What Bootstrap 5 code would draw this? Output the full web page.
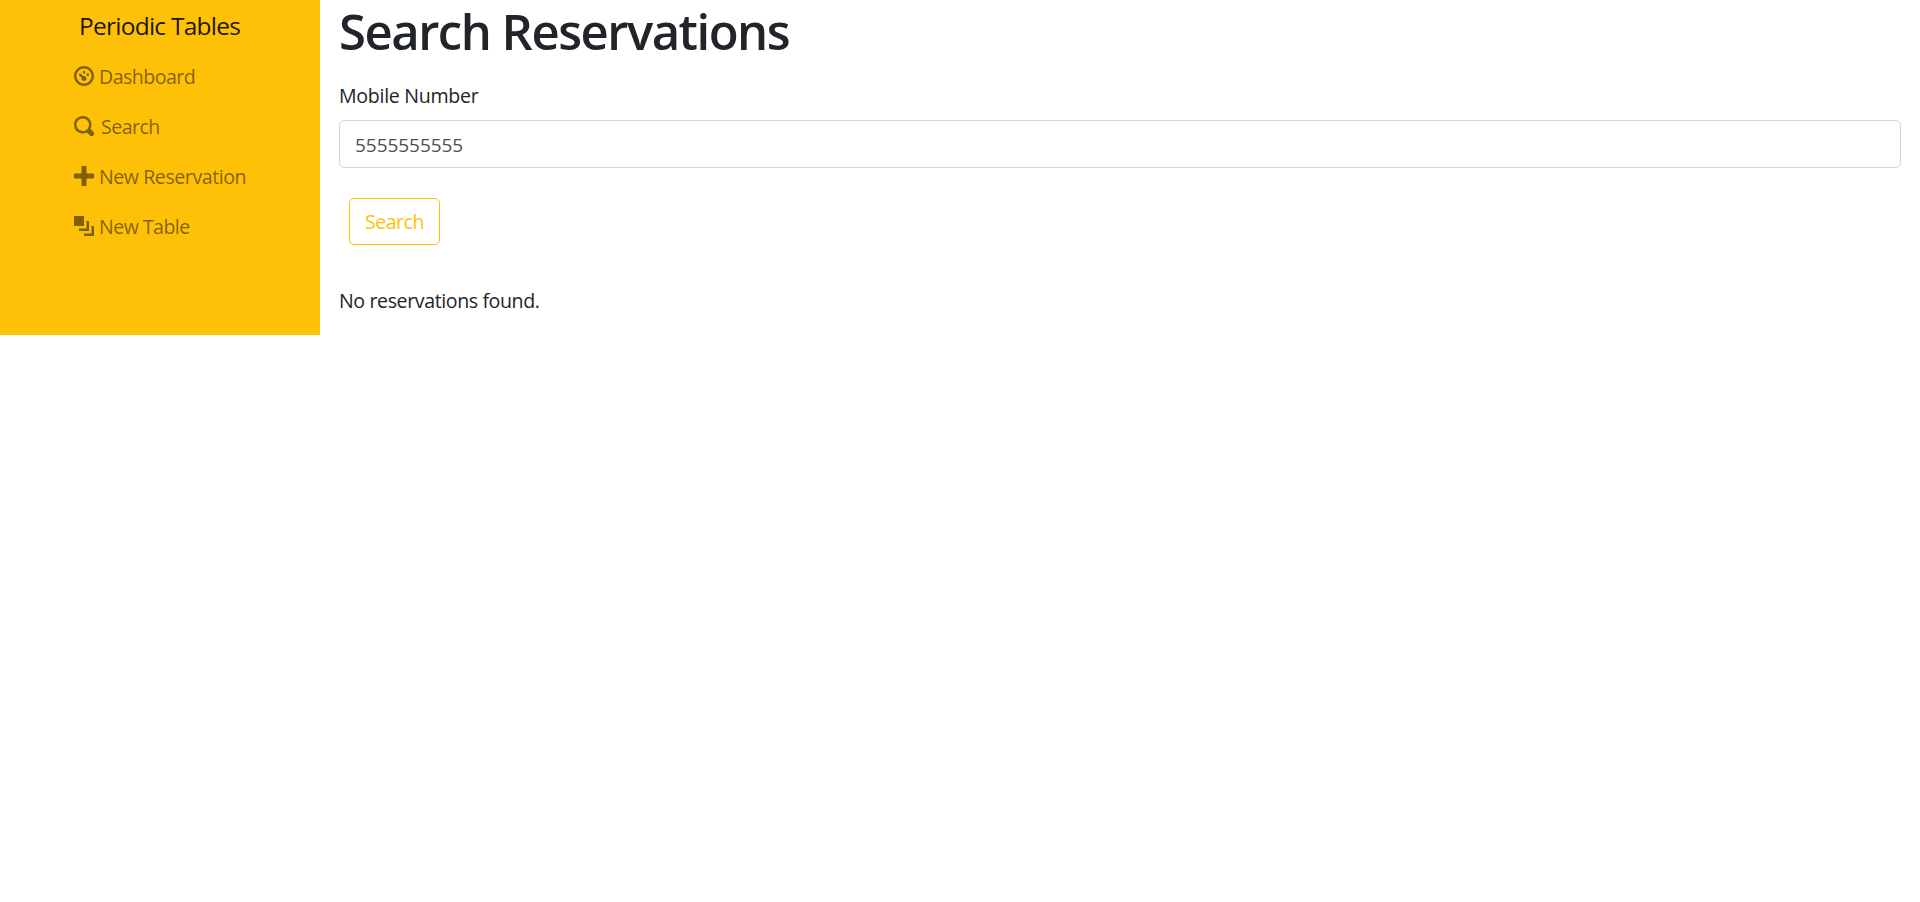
<!DOCTYPE html>
<html lang="en">
<head>
<meta charset="utf-8">
<meta name="viewport" content="width=device-width, initial-scale=1">
<title>Periodic Tables</title>
<link href="https://cdn.jsdelivr.net/npm/bootstrap@5.3.0/dist/css/bootstrap.min.css" rel="stylesheet">
<style>
  html { font-size: 20px; }
  body { font-family: "Segoe UI", "Open Sans", "Noto Sans", sans-serif; color: #212529; font-size: 19.6px; line-height: 30px; }
  .side { width: 320px; height: 335px; background: #ffc107; padding-left: 73.5px; }
  .brand-name { font-size: 24.5px; line-height: 37.5px; padding: 7px 0 6px 5.5px; color: rgba(0,0,0,.9); letter-spacing: -.75px; }
  .side .nav-link { height: 50px; padding: 10px 0; color: rgba(0,0,0,.5); display: flex; line-height: 31px; letter-spacing: -.45px; }
  .side .nav-link.short { letter-spacing: -.55px; }
  .side svg { width: 20px; height: 20px; margin: 5px 5.5px 0 0; fill: currentColor; flex: none; }
  .side .short svg.wide { margin-right: 7.5px; }
  .main-pane { padding: 0 19px; }
  h1 { font-size: 49px; line-height: 60px; font-weight: 600; margin-bottom: 10px; padding-top: 1px; height: 60px; letter-spacing: -1.48px; }
  .form-label { line-height: 31px; height: 30px; letter-spacing: -.3px; }
  .form-control { height: 48px; padding: 9px 15px 7px; border-color: #ced4da; border-radius: 5px; color: #495057; font-size: 19px; letter-spacing: -.05px; }
  .btn-outline-warning { margin: 30px 10px 40px; height: 47px; width: 91px; padding: 0; border-radius: 5px; font-size: 19.6px; letter-spacing: -.5px; }
  .found { letter-spacing: -.4px; line-height: 31px; height: 30px; }
</style>
</head>
<body>
<div class="d-flex align-items-start">
  <nav class="side flex-shrink-0">
    <div class="brand-name"><span>Periodic Tables</span></div>
    <ul class="nav flex-column">
      <li><a class="nav-link short" href="#"><svg viewBox="0 0 8 8"><path d="M4 0c-2.2 0-4 1.8-4 4s1.8 4 4 4 4-1.8 4-4-1.8-4-4-4zm0 1c1.66 0 3 1.34 3 3s-1.34 3-3 3-3-1.34-3-3 1.34-3 3-3zm0 1c-.28 0-.5.22-.5.5s.22.5.5.5.5-.22.5-.5-.22-.5-.5-.5zm-1.66 1a.5.5 0 0 0-.19.84l.91.91c-.02.08-.06.16-.06.25 0 .55.45 1 1 1s1-.45 1-1-.45-1-1-1c-.09 0-.17.04-.25.06l-.91-.91a.5.5 0 0 0-.44-.16.5.5 0 0 0-.06 0zm3.16 0c-.28 0-.5.22-.5.5s.22.5.5.5.5-.22.5-.5-.22-.5-.5-.5z"/></svg><span>Dashboard</span></a></li>
      <li><a class="nav-link short" href="#"><svg class="wide" viewBox="0 0 8 8"><path d="M3.5 0c-1.93 0-3.5 1.57-3.5 3.5s1.57 3.5 3.5 3.5c.59 0 1.17-.14 1.66-.41a1 1 0 0 0 .13.13l1 1a1.02 1.02 0 1 0 1.44-1.44l-1-1a1 1 0 0 0-.16-.13c.27-.49.44-1.06.44-1.66 0-1.93-1.55-3.5-3.5-3.5zm0 1c1.39 0 2.5 1.11 2.5 2.5 0 .66-.24 1.27-.66 1.72l-.03.03a1 1 0 0 0-.13.13c-.44.4-1.04.63-1.69.63-1.39 0-2.5-1.11-2.5-2.5s1.11-2.5 2.5-2.5z"/></svg><span>Search</span></a></li>
      <li><a class="nav-link" href="#"><svg viewBox="0 0 8 8"><path d="M3 0v3h-3v2h3v3h2v-3h3v-2h-3v-3h-2z"/></svg><span>New Reservation</span></a></li>
      <li><a class="nav-link short" href="#"><svg viewBox="0 0 8 8"><path d="M0 0v4h4v-4h-4zm5 2v3h-3v1h4v-4h-1zm2 2v3h-3v1h4v-4h-1z"/></svg><span>New Table</span></a></li>
    </ul>
  </nav>
  <main class="main-pane flex-grow-1">
    <h1><span>Search Reservations</span></h1>
    <form class="pt-2">
      <label class="form-label d-block" for="mobile"><span>Mobile Number</span></label>
      <input class="form-control" id="mobile" type="text" value="5555555555">
      <button class="btn btn-outline-warning d-block" type="button">Search</button>
    </form>
    <p class="found"><span>No reservations found.</span></p>
  </main>
</div>
<script src="https://cdn.jsdelivr.net/npm/bootstrap@5.3.0/dist/js/bootstrap.bundle.min.js"></script>
</body>
</html>
